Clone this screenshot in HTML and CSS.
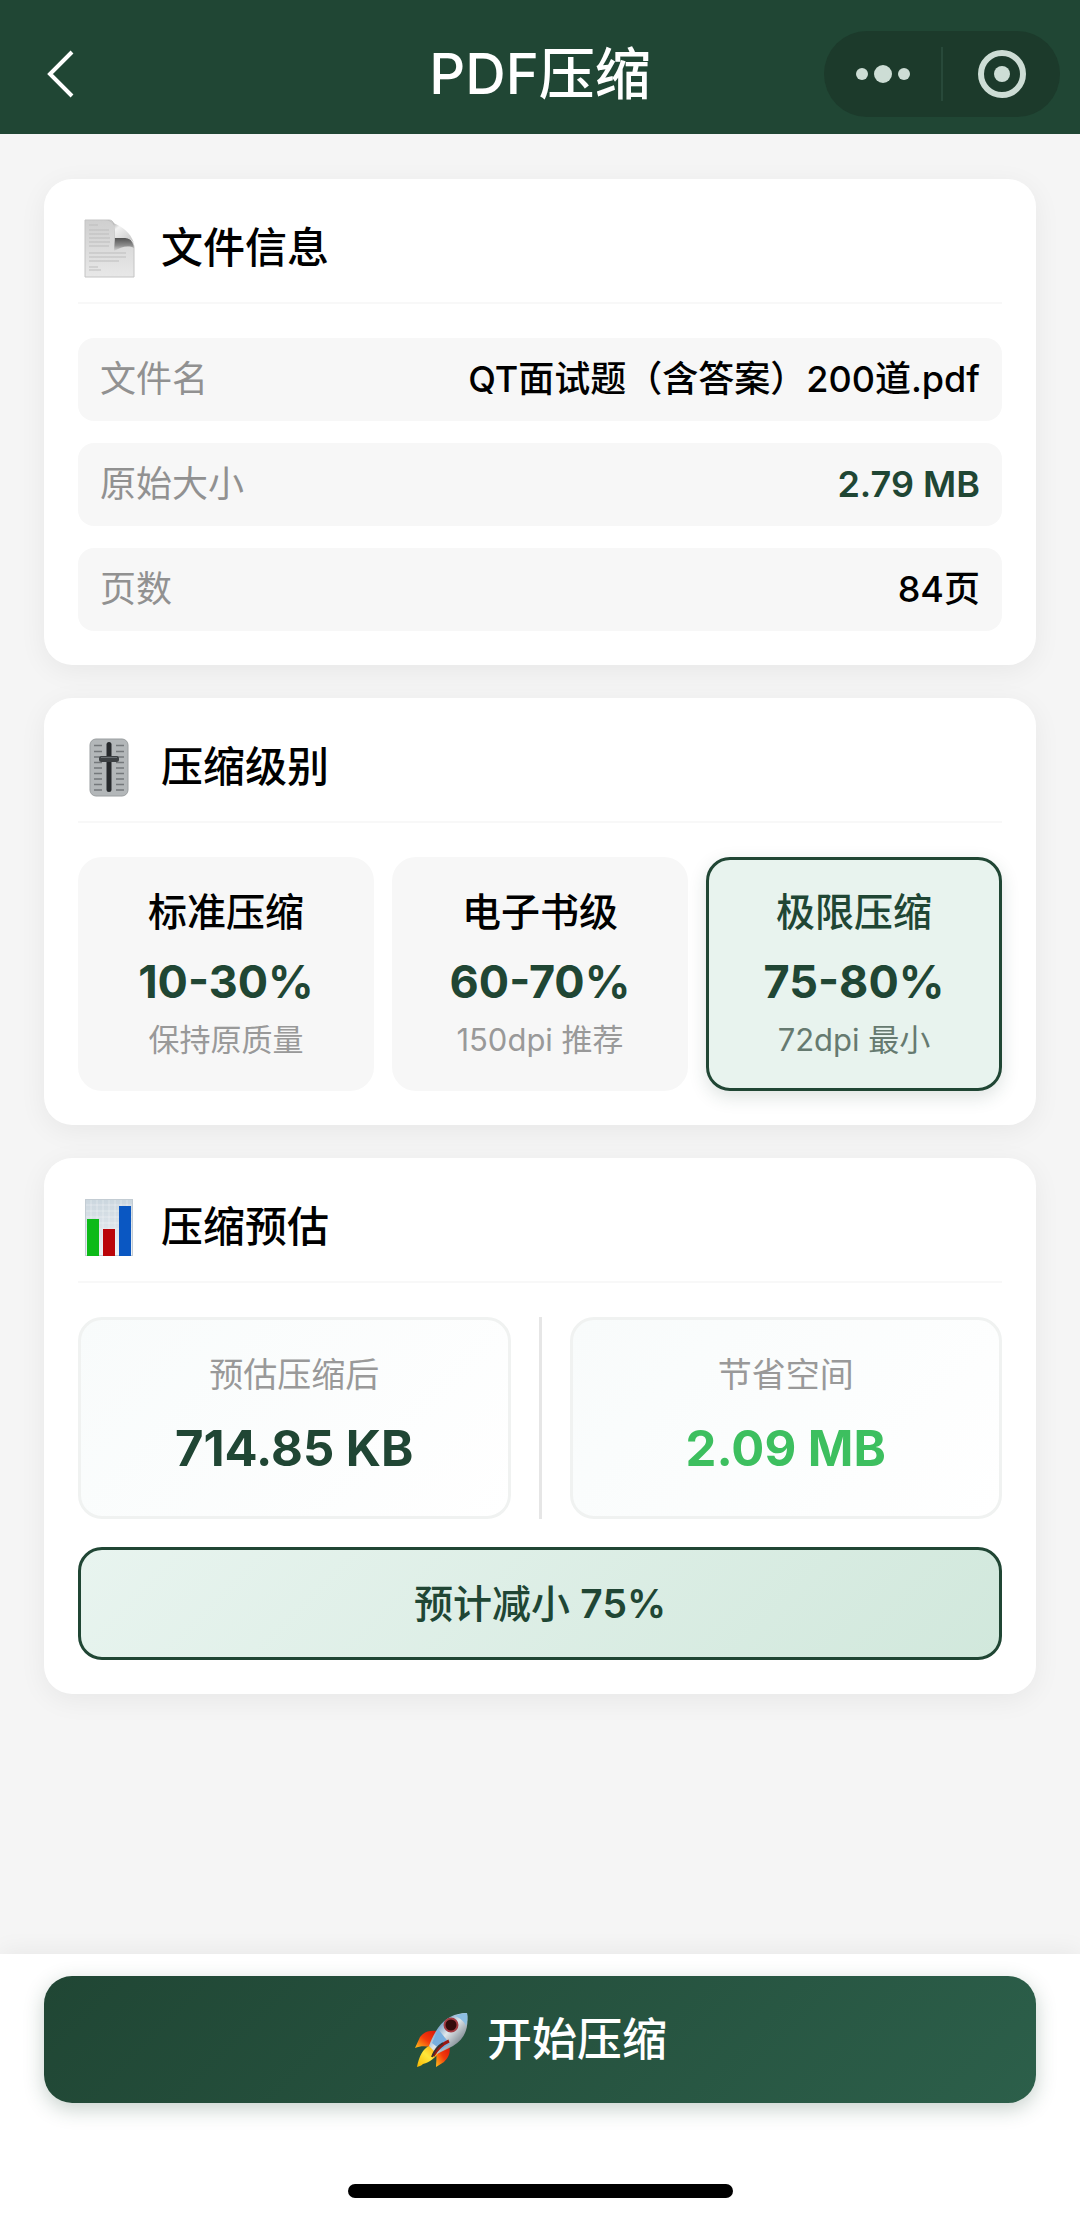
FILE: index.html
```html
<!DOCTYPE html>
<html lang="zh-CN">
<head>
<meta charset="utf-8">
<meta name="viewport" content="width=device-width, initial-scale=1">
<title>PDF压缩</title>
<link rel="stylesheet" href="styles.css">
</head>
<body>
<header class="navbar">
  <div class="nav-side nav-side-start">
    <button class="icon-button" type="button" aria-label="返回">
      <svg width="30" height="52" viewBox="0 0 30 52" fill="none" stroke="#fff" stroke-width="4"><path d="M26 4 4 26l22 22"/></svg>
    </button>
  </div>
  <h1 class="nav-title">PDF压缩</h1>
  <div class="nav-side nav-side-end">
    <div class="capsule">
      <button class="capsule-button" type="button" aria-label="更多">
        <svg width="54" height="20" viewBox="0 0 54 20" fill="#cdddd5"><circle cx="6" cy="10" r="6"/><circle cx="27" cy="10" r="9"/><circle cx="48" cy="10" r="6"/></svg>
      </button>
      <button class="capsule-button" type="button" aria-label="关闭">
        <svg width="48" height="48" viewBox="0 0 48 48"><circle cx="24" cy="24" r="21" fill="none" stroke="#cdddd5" stroke-width="6"/><circle cx="24" cy="24" r="8" fill="#cdddd5"/></svg>
      </button>
    </div>
  </div>
</header>

<main class="content">
  <section class="card">
    <div class="card-header">
      <svg class="card-icon" viewBox="0 0 62 62" aria-hidden="true">
        <defs>
          <linearGradient id="paper" x1="0" y1="0" x2="0" y2="1"><stop offset="0" stop-color="#cfcfcf"/><stop offset="1" stop-color="#e8e8e8"/></linearGradient>
          <linearGradient id="curl" x1="0" y1="0" x2="1" y2="1"><stop offset="0" stop-color="#5f5f5f"/><stop offset=".4" stop-color="#f2f2f2"/><stop offset="1" stop-color="#c2c2c2"/></linearGradient>
          <linearGradient id="fold" x1="0" y1="0" x2="0" y2="1"><stop offset="0" stop-color="#4a4a4a"/><stop offset=".6" stop-color="#8d8d8d"/><stop offset="1" stop-color="#d8d8d8"/></linearGradient>
        </defs>
        <path d="M7 3h24c5 0 6 6 6 12v7h11c5 0 8 4 8 9v29H7z" fill="url(#paper)" stroke="#c4c4c4"/>
        <path d="M11 8h9M11 13h20M11 17h20M11 21h21M11 25h21M11 29h20M11 36h37M11 40h37M11 44h30M11 50h9M11 53h12" stroke="#bdbdbd" stroke-width="1"/>
        <path d="M37 20h9c6 0 9 5 10 11-6-3-13-1-20 3z" fill="url(#fold)"/>
        <path d="M26 3c4 0 7 1 9 3 10 4 17 9 21 20-3-4-7-5-10-5H37v-6c0-7-2-12-11-12z" fill="url(#curl)"/>
      </svg>
      <h2 class="card-title">文件信息</h2>
    </div>
    <dl class="info-list">
      <div class="info-row"><dt>文件名</dt><dd>QT面试题（含答案）200道.pdf</dd></div>
      <div class="info-row"><dt>原始大小</dt><dd class="strong">2.79 MB</dd></div>
      <div class="info-row"><dt>页数</dt><dd>84页</dd></div>
    </dl>
  </section>

  <section class="card">
    <div class="card-header">
      <svg class="card-icon" viewBox="0 0 62 62" aria-hidden="true">
        <rect x="12" y="3" width="38" height="57" rx="6" fill="#b3b7b9" stroke="#9a9ea0"/>
        <path d="M16 9.500h8M16 15.500h8M16 21h8M16 26.500h8M16 32h8M16 37.500h8M16 43h8M16 48.500h8M16 54h8M38 9.500h8M38 15.500h8M38 21h8M38 26.500h8M38 32h8M38 37.500h8M38 43h8M38 48.500h8M38 54h8" stroke="#74787b" stroke-width="1.500"/>
        <rect x="28.500" y="6" width="5" height="50" rx="2.500" fill="#26292c"/>
        <rect x="21" y="20" width="20" height="6" rx="2.500" fill="#3d4144"/>
        <path d="M23 21.500h16" stroke="#6b7074"/>
      </svg>
      <h2 class="card-title" id="level-title">压缩级别</h2>
    </div>
    <div class="options" role="radiogroup" aria-labelledby="level-title">
      <label class="option">
        <input class="option-input" type="radio" name="level" value="standard">
        <span class="option-name">标准压缩</span>
        <span class="option-rate">10-30%</span>
        <span class="option-desc">保持原质量</span>
      </label>
      <label class="option">
        <input class="option-input" type="radio" name="level" value="ebook">
        <span class="option-name">电子书级</span>
        <span class="option-rate">60-70%</span>
        <span class="option-desc">150dpi 推荐</span>
      </label>
      <label class="option">
        <input class="option-input" type="radio" name="level" value="extreme" checked>
        <span class="option-name">极限压缩</span>
        <span class="option-rate">75-80%</span>
        <span class="option-desc">72dpi 最小</span>
      </label>
    </div>
  </section>

  <section class="card">
    <div class="card-header">
      <svg class="card-icon" viewBox="0 0 62 62" aria-hidden="true">
        <defs><linearGradient id="chart" x1="0" y1="0" x2="0" y2="1"><stop offset="0" stop-color="#cbd6de"/><stop offset="1" stop-color="#eef2f6"/></linearGradient></defs>
        <rect x="7.500" y="3.500" width="47" height="56" fill="url(#chart)" stroke="#c3ccd3"/>
        <path d="M8 9h46M8 15h46M8 21h46M8 27h46M8 33h46M13 4v55M19 4v55M25 4v55M31 4v55M37 4v55M43 4v55M49 4v55" stroke="#fff" stroke-opacity=".35"/>
        <rect x="9" y="23" width="12" height="37" fill="#0cba18"/>
        <rect x="25" y="33" width="12" height="27" fill="#ba0509"/>
        <rect x="41" y="10" width="12" height="50" fill="#0a57c2"/>
      </svg>
      <h2 class="card-title">压缩预估</h2>
    </div>
    <div class="estimate">
      <div class="stat"><span class="stat-label">预估压缩后</span><strong class="stat-value">714.85 KB</strong></div>
      <div class="divider"></div>
      <div class="stat"><span class="stat-label">节省空间</span><strong class="stat-value stat-value-saved">2.09 MB</strong></div>
    </div>
    <p class="reduction">预计减小 <strong class="reduction-rate">75%</strong></p>
  </section>
</main>

<footer class="action-bar">
  <button class="start-button" type="button">
    <svg width="56" height="56" viewBox="0 0 56 56" aria-hidden="true">
      <defs>
        <linearGradient id="hull" x1="0" y1="0" x2="1" y2="1"><stop offset=".2" stop-color="#4f86b8"/><stop offset=".48" stop-color="#dfe6ea"/><stop offset=".8" stop-color="#77818a"/></linearGradient>
        <linearGradient id="fin" x1="1" y1="0" x2="0" y2="1"><stop offset="0" stop-color="#d81408"/><stop offset=".5" stop-color="#f33a0b"/><stop offset="1" stop-color="#ffc21a"/></linearGradient>
        <linearGradient id="flame" x1="1" y1="0" x2="0" y2="1"><stop offset="0" stop-color="#ff9d00"/><stop offset=".5" stop-color="#ffe83b"/><stop offset="1" stop-color="#f7b500"/></linearGradient>
      </defs>
      <path d="M24 19c-8-1-13 1-17 6L2 36c5-2 10-2 15-1z" fill="url(#fin)"/>
      <path d="M36 33c2 7 0 12-5 17l-8 5c0-5 1-9 0-14z" fill="url(#fin)"/>
      <path d="M16 34c-6 3-10 10-12 21 2-1 4-1 6-3 7-2 12-6 16-12z" fill="url(#flame)"/>
      <path d="M54 1c2 15-2 26-14 33-5 3-11 5-16 8l-8-8c2-6 5-12 9-18C32 6 42 1 54 1z" fill="url(#hull)"/>
      <path d="M54 1c1 5 0 9-1 13-2-5-6-8-11-10 4-2 8-3 12-3z" fill="#8dbfe2"/>
      <path d="m25 17 12 15-9 6-9-7z" fill="#78aede"/>
      <path d="M36 29c-7 3-12 8-16 15" fill="none" stroke="#9b1712" stroke-width="3"/>
      <path d="M30 31c-5 3-9 8-11 14" fill="none" stroke="#3b3030" stroke-width="2"/>
      <circle cx="38" cy="13" r="6.500" fill="#330b0b" stroke="#a43c42" stroke-width="2"/>
    </svg>
    <span>开始压缩</span>
  </button>
  <div class="home-indicator"></div>
</footer>
</body>
</html>
```
FILE: styles.css
```css
:root {
  --green: #204634;
  --gray: #919191;
  --tile: #f7f7f7;
}

* {
  box-sizing: border-box;
}

body {
  margin: 0;
  min-height: 100vh;
  display: flex;
  flex-direction: column;
  background: #f5f5f5;
  color: #000;
  font-family: Inter, "Noto Sans CJK SC", sans-serif;
}

button {
  padding: 0;
  border: 0;
  background: none;
  font: inherit;
  color: inherit;
}

h1, h2, p, dl, dd {
  margin: 0;
}

.navbar {
  display: grid;
  grid-template-columns: 1fr auto 1fr;
  align-items: center;
  padding: 31px 20px 17px;
  background: var(--green);
}

.nav-side {
  display: flex;
  align-items: center;
}

.nav-side-start {
  padding-left: 26px;
}

.nav-side-end {
  justify-content: flex-end;
}

.icon-button,
.capsule-button {
  display: flex;
  align-items: center;
  justify-content: center;
}

.nav-title {
  color: #fff;
  font-size: 56px;
  font-weight: 500;
  line-height: 86px;
}

.capsule {
  display: flex;
  align-items: center;
  width: 236px;
  height: 86px;
  border-radius: 43px;
  background: #1c3a2b;
}

.capsule-button {
  flex: 1;
  height: 54px;
}

.capsule-button + .capsule-button {
  border-left: 2px solid #28493a;
}

.content {
  display: flex;
  flex-direction: column;
  gap: 33px;
  padding: 45px 44px;
}

.card {
  padding: 34px;
  border-radius: 28px;
  background: #fff;
  box-shadow: 0 6px 28px rgba(0, 0, 0, 0.06);
}

.card-header {
  display: flex;
  align-items: center;
  gap: 21px;
  margin-bottom: 34px;
  padding-bottom: 20px;
  border-bottom: 2px solid #f8f8f8;
}

.card-icon {
  width: 62px;
  height: 62px;
}

.card-title {
  font-size: 42px;
  font-weight: 500;
  line-height: 69px;
}

.info-list {
  display: flex;
  flex-direction: column;
  gap: 22px;
}

.info-row {
  display: flex;
  align-items: center;
  justify-content: space-between;
  padding: 14px 22px;
  border-radius: 16px;
  background: var(--tile);
  font-size: 36px;
  line-height: 55px;
}

.info-row dt {
  color: var(--gray);
}

.info-row dd {
  font-weight: 500;
}

.info-row .strong {
  color: var(--green);
  font-weight: 600;
}

.options {
  display: grid;
  grid-template-columns: repeat(3, 1fr);
  gap: 18px;
}

.option {
  position: relative;
  display: flex;
  flex-direction: column;
  align-items: center;
  padding: 25px 8px 27px;
  border: 3px solid transparent;
  border-radius: 24px;
  background: var(--tile) border-box;
}

.option-input {
  position: absolute;
  inset: 0;
  margin: 0;
  appearance: none;
}

.option-name {
  margin-bottom: 12px;
  font-size: 39px;
  font-weight: 500;
  line-height: 54px;
}

.option-rate {
  margin-bottom: 6px;
  color: var(--green);
  font-size: 45px;
  font-weight: 700;
  line-height: 62px;
}

.option-desc {
  color: #999;
  font-size: 31px;
  line-height: 42px;
}

.option:has(:checked) {
  border-color: var(--green);
  background: #e8f3ee;
  color: var(--green);
  box-shadow: 0 6px 18px rgba(32, 70, 52, 0.15);
}

.option:has(:checked) .option-desc {
  color: #667a70;
}

.estimate {
  display: flex;
  gap: 28px;
  margin-bottom: 28px;
}

.stat {
  flex: 1;
  display: flex;
  flex-direction: column;
  align-items: center;
  gap: 18px;
  padding: 31px 8px 35px;
  border: 3px solid #f0f2f1;
  border-radius: 24px;
  background: linear-gradient(135deg, #f8fbfb, #fff);
}

.stat-label {
  color: #999;
  font-size: 34px;
  line-height: 48px;
}

.stat-value {
  color: var(--green);
  font-size: 49px;
  font-weight: 700;
  line-height: 64px;
}

.stat-value-saved {
  color: #3dbf5f;
}

.divider {
  width: 3px;
  background: #e6e6e6;
}

.reduction {
  padding: 26px;
  border: 3px solid var(--green);
  border-radius: 24px;
  background: linear-gradient(135deg, #e8f4ef, #d1e8dc);
  color: var(--green);
  font-size: 39px;
  font-weight: 500;
  line-height: 55px;
  text-align: center;
}

.reduction-rate {
  font-weight: 600;
}

.action-bar {
  display: flex;
  flex-direction: column;
  gap: 81px;
  margin-top: auto;
  padding: 22px 44px;
  background: #fff;
  box-shadow: 0 -4px 22px rgba(0, 0, 0, 0.05);
}

.start-button {
  display: flex;
  align-items: center;
  justify-content: center;
  gap: 18px;
  padding: 30px;
  border-radius: 28px;
  background: linear-gradient(135deg, #204634, #2c5f4a);
  box-shadow: 0 6px 20px rgba(32, 70, 52, 0.25);
  color: #fff;
  font-size: 45px;
  font-weight: 500;
  line-height: 67px;
}

.home-indicator {
  align-self: center;
  width: 385px;
  height: 14px;
  border-radius: 7px;
  background: #000;
}
```
